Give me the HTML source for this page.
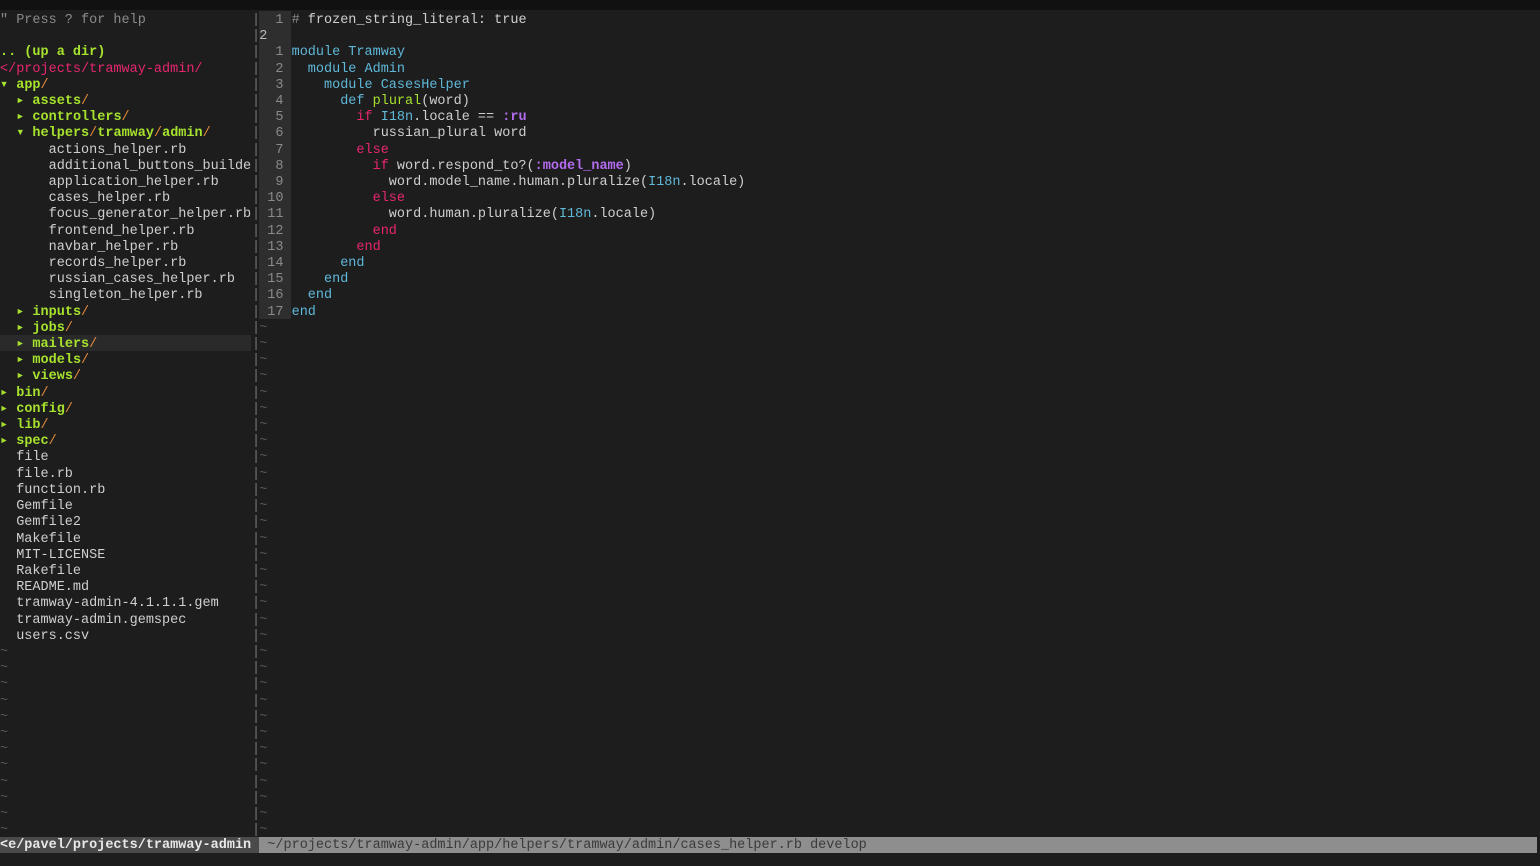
<!DOCTYPE html>
<html><head><meta charset="utf-8"><style>
html,body{margin:0;padding:0;background:#1d1d1d;width:1540px;height:866px;overflow:hidden}
.top{position:absolute;left:0;top:0;width:1540px;height:10px;background:#111}
pre{position:absolute;margin:0;font-family:"Liberation Mono",monospace;font-size:13.5px;line-height:16.2px;color:#cfcfcf;white-space:pre}
.g{color:#a6e22e;font-weight:bold}.o{color:#e08a3a}.p{color:#e6266f}.c{color:#8a8a8a}
.b{color:#5fb8d8}.k{color:#e6266f}.v{color:#b36cf0;font-weight:bold}.t{color:#555}
.cur{position:absolute;left:0;top:335px;width:251px;height:16.2px;background:#2a2a2a}
.gut{position:absolute;left:259px;top:11px;width:32.4px;height:307.8px;background:#2e2e2e}
.sl{position:absolute;left:0;top:837px;width:259px;height:16.2px;background:#4a4a4a}
.sr{position:absolute;left:259px;top:837px;width:1278px;height:16.2px;background:#8e8e8e}
</style></head><body>
<div class="top"></div>
<div class="cur"></div>
<div class="gut"></div>
<div class="sl"></div><div class="sr"></div>
<pre style="left:0;top:13px"><span class="c">" Press ? for help</span>

<span class="g">.. (up a dir)</span>
<span class="p">&lt;/projects/tramway-admin/</span>
<span class="g">▾ app</span><span class="o">/</span>
<span class="g">  ▸ assets</span><span class="o">/</span>
<span class="g">  ▸ controllers</span><span class="o">/</span>
<span class="g">  ▾ helpers</span><span class="o">/</span><span class="g">tramway</span><span class="o">/</span><span class="g">admin</span><span class="o">/</span>
      actions_helper.rb
      additional_buttons_builde
      application_helper.rb
      cases_helper.rb
      focus_generator_helper.rb
      frontend_helper.rb
      navbar_helper.rb
      records_helper.rb
      russian_cases_helper.rb
      singleton_helper.rb
<span class="g">  ▸ inputs</span><span class="o">/</span>
<span class="g">  ▸ jobs</span><span class="o">/</span>
<span class="g">  ▸ mailers</span><span class="o">/</span>
<span class="g">  ▸ models</span><span class="o">/</span>
<span class="g">  ▸ views</span><span class="o">/</span>
<span class="g">▸ bin</span><span class="o">/</span>
<span class="g">▸ config</span><span class="o">/</span>
<span class="g">▸ lib</span><span class="o">/</span>
<span class="g">▸ spec</span><span class="o">/</span>
  file
  file.rb
  function.rb
  Gemfile
  Gemfile2
  Makefile
  MIT-LICENSE
  Rakefile
  README.md
  tramway-admin-4.1.1.1.gem
  tramway-admin.gemspec
  users.csv
<span class="t">~
~
~
~
~
~
~
~
~
~
~
~</span></pre>
<pre style="left:252px;top:13px;color:#777">|
|
|
|
|
|
|
|
|
|
|
|
|
|
|
|
|
|
|
|
|
|
|
|
|
|
|
|
|
|
|
|
|
|
|
|
|
|
|
|
|
|
|
|
|
|
|
|
|
|
|</pre>
<pre style="left:259.2px;top:13px"><span class="c">  1 </span><span class="c">#</span> frozen_string_literal: true
<span style="color:#bbb">2</span>
<span class="c">  1 </span><span class="b">module Tramway</span>
<span class="c">  2 </span>  <span class="b">module Admin</span>
<span class="c">  3 </span>    <span class="b">module CasesHelper</span>
<span class="c">  4 </span>      <span class="b">def</span> <span class="g" style="font-weight:normal">plural</span>(word)
<span class="c">  5 </span>        <span class="k">if</span> <span class="b">I18n</span>.locale == <span class="v">:ru</span>
<span class="c">  6 </span>          russian_plural word
<span class="c">  7 </span>        <span class="k">else</span>
<span class="c">  8 </span>          <span class="k">if</span> word.respond_to?(<span class="v">:model_name</span>)
<span class="c">  9 </span>            word.model_name.human.pluralize(<span class="b">I18n</span>.locale)
<span class="c"> 10 </span>          <span class="k">else</span>
<span class="c"> 11 </span>            word.human.pluralize(<span class="b">I18n</span>.locale)
<span class="c"> 12 </span>          <span class="k">end</span>
<span class="c"> 13 </span>        <span class="k">end</span>
<span class="c"> 14 </span>      <span class="b">end</span>
<span class="c"> 15 </span>    <span class="b">end</span>
<span class="c"> 16 </span>  <span class="b">end</span>
<span class="c"> 17 </span><span class="b">end</span>
<span class="t">~
~
~
~
~
~
~
~
~
~
~
~
~
~
~
~
~
~
~
~
~
~
~
~
~
~
~
~
~
~
~
~</span></pre>
<pre style="left:0;top:838px;color:#e8e8e8;font-weight:bold">&lt;e/pavel/projects/tramway-admin</pre>
<pre style="left:259.2px;top:838px;color:#3a3a3a"> ~/projects/tramway-admin/app/helpers/tramway/admin/cases_helper.rb develop</pre>
</body></html>
